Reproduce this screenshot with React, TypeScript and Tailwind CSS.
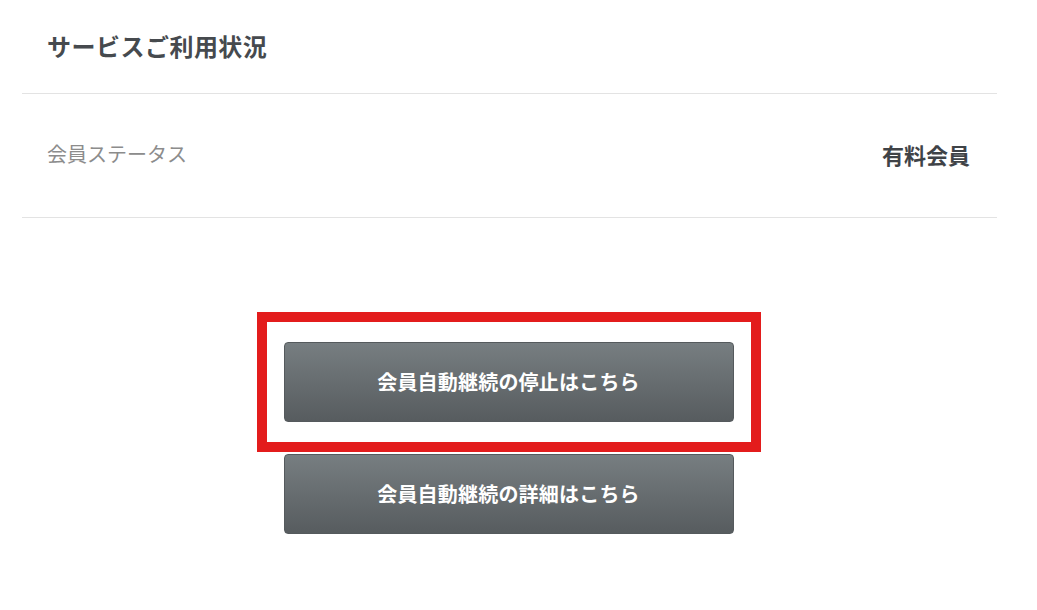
import React from "react";

export default function App() {
  const font = { fontFamily: '"Noto Sans CJK JP", "Noto Sans", sans-serif' };
  const btn =
    "w-[450px] h-[80px] rounded-[4px] border border-[#555a5d] bg-gradient-to-b from-[#777e81] to-[#575c5f] text-white text-[20px] font-bold tracking-[0.01em]";
  return (
    <div className="w-[1037px] h-[610px] bg-white overflow-hidden" style={font}>
      <div className="ml-[22px] w-[975px]">
        <div className="h-[94px] flex items-center pl-[25px] border-b border-[#e3e3e3]">
          <h2 className="text-[24px] font-bold text-[#464a4e] tracking-[0.02em] leading-none -mt-[2px]">サービスご利用状況</h2>
        </div>
        <div className="h-[124px] flex items-center justify-between pl-[25px] pr-[27px] border-b border-[#e3e3e3]">
          <span className="text-[20px] text-[#8c8c8c] leading-none -mt-[3px]">会員ステータス</span>
          <span className="text-[22px] font-bold text-[#3f4347] leading-none -mt-[4px]">有料会員</span>
        </div>
        <div className="mt-[94px] flex flex-col items-center -translate-x-px">
          <div className="w-[504px] h-[140px] border-[10px] border-[#e31c1c] flex items-center justify-center">
            <button className={btn}>会員自動継続の停止はこちら</button>
          </div>
          <button className={"mt-[2px] " + btn}>会員自動継続の詳細はこちら</button>
        </div>
      </div>
    </div>
  );
}
